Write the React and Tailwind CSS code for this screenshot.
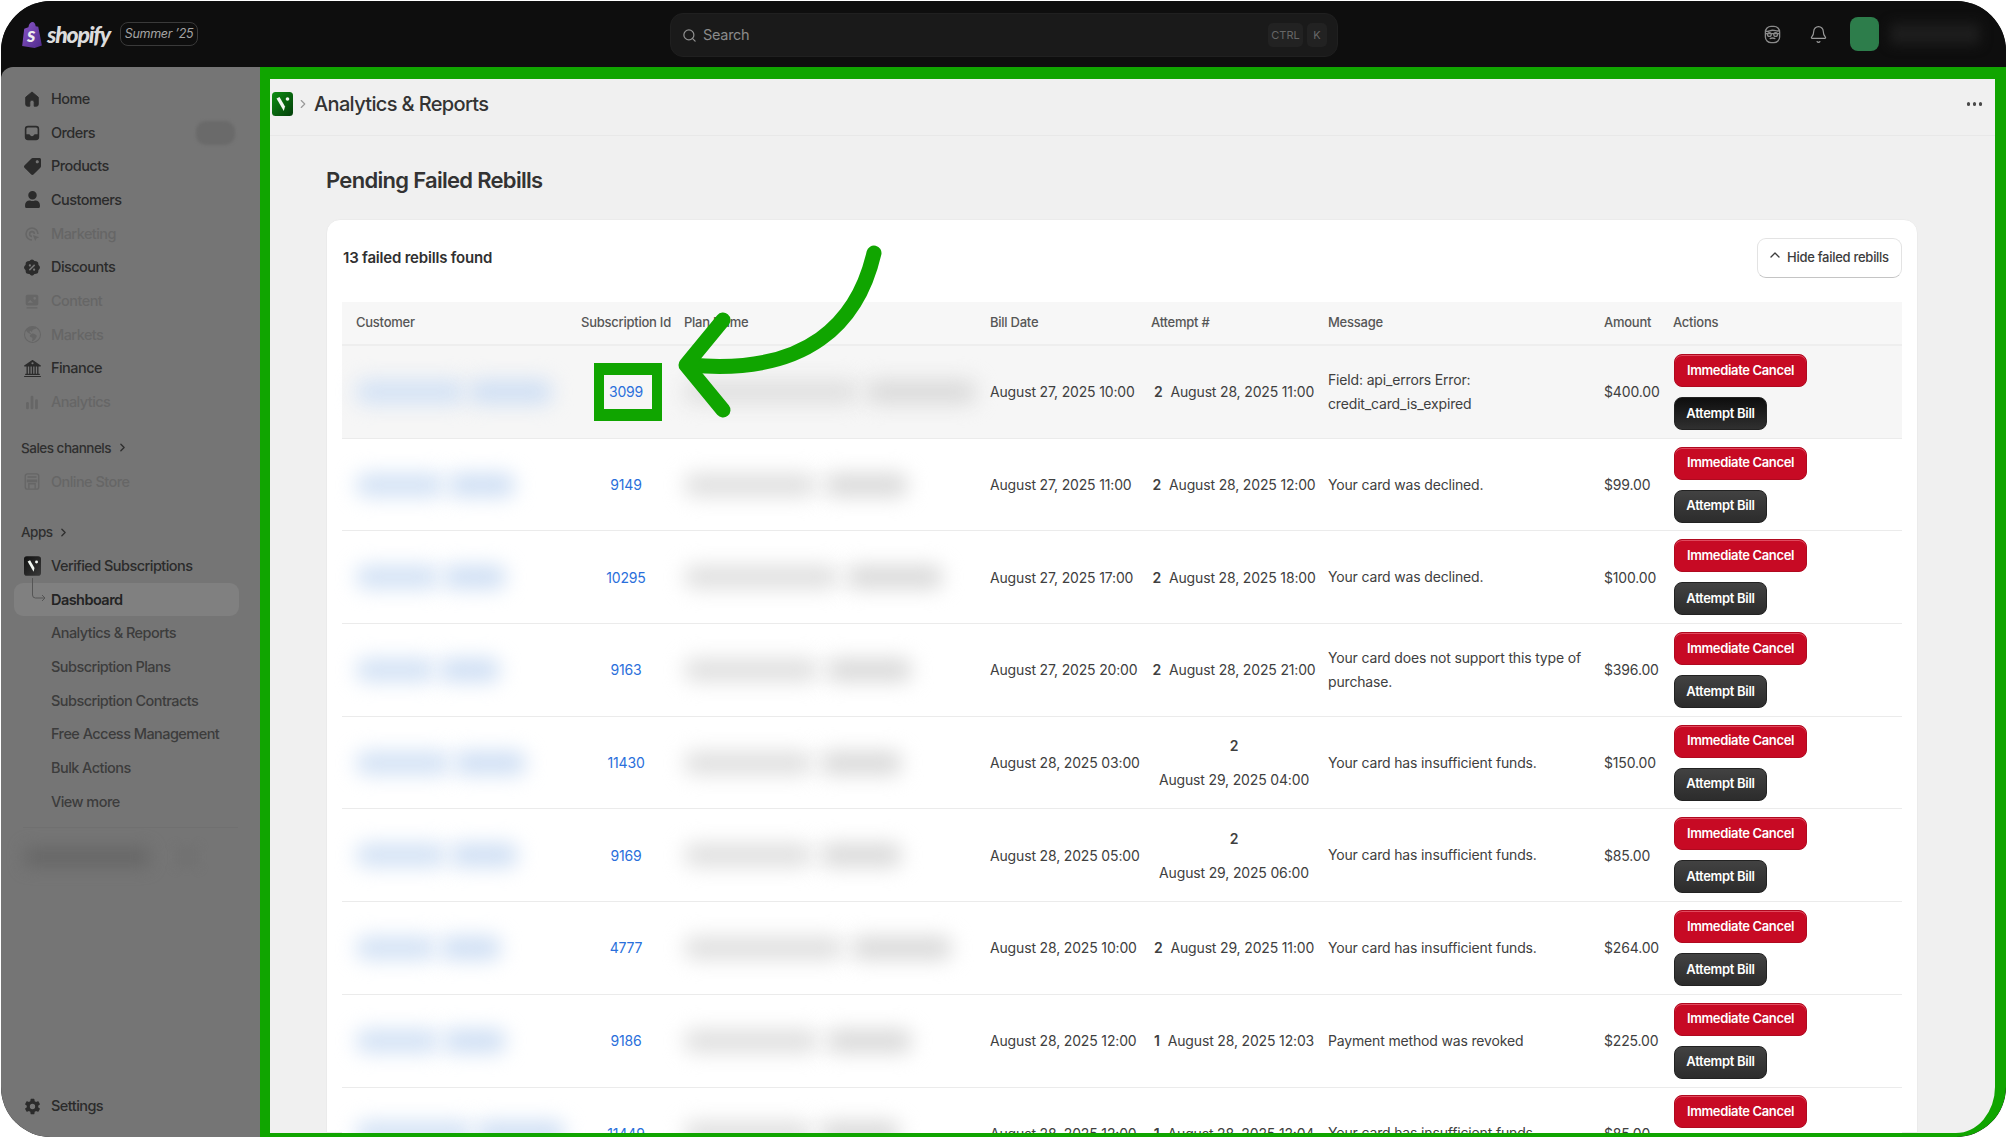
import React from "react";
import { Search, Bell, ChevronRight, ChevronUp } from "lucide-react";
import { FaTag, FaUser } from "react-icons/fa";
import { RiDiscountPercentFill } from "react-icons/ri";
import { BsBank2, BsGlobeAmericas } from "react-icons/bs";
import { IoSettingsSharp } from "react-icons/io5";

const I = ({ children }) => (
  <svg viewBox="0 0 20 20" className="w-[18px] h-[18px]" fill="currentColor">{children}</svg>
);
const HomeI = () => <I><path d="M10 2.2 3 8v8a2 2 0 0 0 2 2h2.6v-4.4a2.4 2.4 0 0 1 4.8 0V18H15a2 2 0 0 0 2-2V8z" strokeLinejoin="round" stroke="currentColor" /></I>;
const OrdersI = () => <I><path fillRule="evenodd" d="M5.5 2h9A3.5 3.5 0 0 1 18 5.500v9a3.500 3.500 0 0 1-3.500 3.500h-9A3.500 3.500 0 0 1 2 14.500v-9A3.500 3.500 0 0 1 5.500 2zm-1.700 9.500h3.400c.5 1.300 1.600 2 2.800 2s2.300-.7 2.800-2h3.400v-6a1.700 1.700 0 0 0-1.700-1.700h-9a1.700 1.700 0 0 0-1.700 1.700z" /></I>;
const MarketingI = () => <I><path d="M10 2.500a7.500 7.500 0 0 1 7.500 7.500h-1.800A5.700 5.700 0 1 0 10 15.700v1.800A7.500 7.500 0 0 1 10 2.500zm0 4a3.500 3.500 0 0 1 3.500 3.500h-1.700A1.800 1.800 0 1 0 10 11.800v1.700a3.500 3.500 0 0 1 0-7zM11 11l7 2.500-3 1.400-1.400 3z" /></I>;
const ContentI = () => <I><path fillRule="evenodd" d="M5 3h10a2 2 0 0 1 2 2v8a2 2 0 0 1-2 2H5a2 2 0 0 1-2-2V5a2 2 0 0 1 2-2zm8 2.500a1.500 1.500 0 1 0 0 3 1.500 1.500 0 0 0 0-3zM5 12l3-3 3 3zM4 17h12v1.400H4z" /></I>;
const AnalyticsI = () => <I><rect x="3.500" y="10" width="3" height="8" rx="1.400" /><rect x="8.500" y="3" width="3" height="15" rx="1.400" /><rect x="13.500" y="7" width="3" height="11" rx="1.400" /></I>;
const StoreI = () => <svg viewBox="0 0 20 20" className="w-[19px] h-[19px]" fill="none" stroke="currentColor" strokeWidth="1.500"><rect x="2.500" y="1.500" width="15" height="17" rx="2.500" /><path d="M5 5h10M5 8.500h10v1.500H5zM6.500 18v-5.500h7V18" /></svg>;
const VMark = ({ id, from, to, size }) => (
  <svg viewBox="0 0 21 24" className={size}>
    <defs><linearGradient id={id} x1="0" y1="0" x2="1" y2="1"><stop offset="0" stopColor={from} /><stop offset="1" stopColor={to} /></linearGradient></defs>
    <rect width="21" height="24" rx="3.500" fill={`url(#${id})`} />
    <path d="M4.500 6.500 7.500 5l5.500 9.500-1.200 4.500z" fill="#f2f7f2" />
    <circle cx="15.500" cy="7" r="1.800" fill="#f2f7f2" />
  </svg>
);

const S = (c) => <span className="flex w-[18px] justify-center text-[17px]">{c}</span>;
const primary = [
  ["Home", <HomeI />, 1],
  ["Orders", <OrdersI />, 1],
  ["Products", <FaTag className="rotate-90" />, 1],
  ["Customers", <FaUser />, 1],
  ["Marketing", <MarketingI />, 0],
  ["Discounts", <RiDiscountPercentFill className="text-[19px]" />, 1],
  ["Content", <ContentI />, 0],
  ["Markets", <BsGlobeAmericas />, 0],
  ["Finance", <BsBank2 />, 1],
  ["Analytics", <AnalyticsI />, 0],
];
const subs = ["Analytics & Reports", "Subscription Plans", "Subscription Contracts", "Free Access Management", "Bulk Actions", "View more"];

function NavRow({ label, icon, on = true, badge }) {
  return (
    <div className={`relative flex h-[33.7px] items-center pl-[22px] text-[14.5px] font-medium tracking-[-0.55px] ${on ? "text-[#2b2b2b]" : "text-[#666666]"}`}>
      <span className="flex w-[28px] items-center">{S(icon)}</span>
      {label}
      {badge && <span className="absolute left-[195px] top-[5px] h-[24px] w-[39px] rounded-[10px] bg-[#6a6a6a] blur-[1.5px]" />}
    </div>
  );
}

function Sidebar() {
  return (
    <aside className="flex w-[259px] shrink-0 flex-col rounded-tl-[12px] bg-[#757575] pt-[15px]">
      {primary.map(([l, ic, on]) => <NavRow key={l} label={l} icon={ic} on={!!on} badge={l === "Orders"} />)}
      <div className="mt-[12px] flex h-[33.7px] items-center gap-[5px] pl-[20px] text-[13.5px] font-medium tracking-[-0.5px] text-[#2f2f2f]">
        Sales channels <ChevronRight size={13} strokeWidth={2.5} />
      </div>
      <NavRow label="Online Store" icon={<StoreI />} on={false} />
      <div className="mt-[17px] flex h-[33.7px] items-center gap-[4px] pl-[20px] text-[13.5px] font-medium tracking-[-0.5px] text-[#2f2f2f]">
        Apps <ChevronRight size={13} strokeWidth={2.5} />
      </div>
      <NavRow label="Verified Subscriptions" icon={<VMark id="vs" from="#111111" to="#3a3a3a" size="w-[17px] h-[20px]" />} />
      <div className="relative mx-[13px] flex h-[33.7px] w-[225px] items-center rounded-[9px] bg-[#808080] pl-[37px] text-[14.5px] font-semibold tracking-[-0.55px] text-[#232323]">
        <svg viewBox="0 0 16 28" className="absolute left-[17px] top-[-5px] h-[28px] w-[16px]" fill="none" stroke="#555555" strokeWidth="1"><path d="M1.500 0v17a3 3 0 0 0 3 3H14M11 17l3 3-3 3" /></svg>
        Dashboard
      </div>
      {subs.map((s) => (
        <div key={s} className="flex h-[33.7px] items-center pl-[50px] text-[14.5px] font-medium tracking-[-0.55px] text-[#3c3c3c]">{s}</div>
      ))}
      <div className="mx-[22px] mt-[9px] h-px bg-[#707070]" />
      <div className="mt-[18px] flex items-center gap-[26px] pl-[24px]">
        <span className="h-[20px] w-[124px] rounded bg-[#686868] blur-[8px]" />
        <span className="h-[22px] w-[24px] rounded bg-[#727272] blur-[4px]" />
      </div>
      <div className="mt-auto mb-[14px]">
        <NavRow label="Settings" icon={<IoSettingsSharp />} />
      </div>
    </aside>
  );
}

function TopBar() {
  return (
    <header className="relative flex h-[66px] shrink-0 items-center bg-[#0e0e0e] pl-[20px] pr-[26px]">
      <svg viewBox="0 0 20 26" className="h-[27px] w-[21px] shrink-0">
        <defs><linearGradient id="bag" x1="0" y1="0" x2="1" y2="1"><stop offset="0" stopColor="#8a56c9" /><stop offset="1" stopColor="#4f2a8a" /></linearGradient></defs>
        <path d="M1 24 3 7.500 7 6C7.500 2.500 9.500 1 11 1s3 2 3 4l2.500.5L20 23.500 13 26z" fill="url(#bag)" />
        <text x="9.500" y="20" textAnchor="middle" fontSize="15" fontWeight="800" fontStyle="italic" fill="#eeeeee" fontFamily="Lato, sans-serif">S</text>
      </svg>
      <span className="ml-[5px] text-[23px] leading-none font-black italic tracking-[-1.2px] text-[#dcdcdc] [font-family:Lato,sans-serif]">shopify</span>
      <span className="ml-[10px] flex h-[24px] w-[78px] items-center justify-center rounded-[8px] border border-[#3a3a3a] text-[12.5px] italic tracking-[-0.3px] text-[#a3a3a3]">Summer ’25</span>
      <div className="absolute left-[669px] top-[12px] flex h-[44px] w-[668px] items-center rounded-[13px] border border-[#202020] bg-[#1a1a1a] pl-[11px] pr-[10px]">
        <Search size={15} className="text-[#8f8f8f]" />
        <span className="ml-[6px] text-[14.5px] tracking-[-0.3px] text-[#8a8a8a]">Search</span>
        <span className="ml-auto flex h-[24px] w-[35px] items-center justify-center rounded-[5px] bg-[#222222] text-[11px] text-[#666666]">CTRL</span>
        <span className="ml-[4px] flex h-[24px] w-[20px] items-center justify-center rounded-[5px] bg-[#222222] text-[11px] text-[#666666]">K</span>
      </div>
      <div className="ml-auto flex items-center">
        <svg viewBox="0 0 20 20" className="h-[19px] w-[19px]" fill="none" stroke="#8a8a8a" strokeWidth="1.400">
          <rect x="2.500" y="1.500" width="15" height="17" rx="6" />
          <path d="M3 6.500c3 1 4-1 7-1s5 1.500 7 .5M3 9h14" />
          <circle cx="6.700" cy="10" r="2" /><circle cx="13.300" cy="10" r="2" />
          <path d="M7 14.500c1.500-.8 4.500-.8 6 0" />
        </svg>
        <Bell size={19} strokeWidth={1.5} className="ml-[27px] text-[#9a9a9a]" />
        <span className="ml-[22px] h-[34px] w-[29px] rounded-[8px] bg-[#2d7d4b]" />
        <span className="ml-[11px] h-[22px] w-[90px] rounded bg-[#1d1d1d] blur-[6px]" />
      </div>
    </header>
  );
}

const rows = [
  { c: 198, id: "3099", p: 294, b: "August 27, 2025 10:00", n: "2", d: "August 28, 2025 11:00", m: ["Field: api_errors Error:", "credit_card_is_expired"], a: "$400.00", hi: true },
  { c: 160, id: "9149", p: 220, b: "August 27, 2025 11:00", n: "2", d: "August 28, 2025 12:00", m: ["Your card was declined."], a: "$99.00" },
  { c: 150, id: "10295", p: 256, b: "August 27, 2025 17:00", n: "2", d: "August 28, 2025 18:00", m: ["Your card was declined."], a: "$100.00" },
  { c: 144, id: "9163", p: 224, b: "August 27, 2025 20:00", n: "2", d: "August 28, 2025 21:00", m: ["Your card does not support this type of", "purchase."], a: "$396.00" },
  { c: 171, id: "11430", p: 214, b: "August 28, 2025 03:00", n: "2", d: "August 29, 2025 04:00", m: ["Your card has insufficient funds."], a: "$150.00", wrap: true },
  { c: 163, id: "9169", p: 214, b: "August 28, 2025 05:00", n: "2", d: "August 29, 2025 06:00", m: ["Your card has insufficient funds."], a: "$85.00", wrap: true },
  { c: 145, id: "4777", p: 265, b: "August 28, 2025 10:00", n: "2", d: "August 29, 2025 11:00", m: ["Your card has insufficient funds."], a: "$264.00" },
  { c: 151, id: "9186", p: 224, b: "August 28, 2025 12:00", n: "1", d: "August 28, 2025 12:03", m: ["Payment method was revoked"], a: "$225.00" },
  { c: 211, id: "11449", p: 212, b: "August 28, 2025 12:00", n: "1", d: "August 28, 2025 12:04", m: ["Your card has insufficient funds."], a: "$85.00" },
];
const grid = "grid grid-cols-[225px_103px_306px_161px_177px_276px_69px_242px]";
const cell = "pl-[14px] flex items-center";

function Row({ r }) {
  return (
    <div className={`${grid} h-[92.7px] shrink-0 border-b border-[#ebebeb] text-[14px] tracking-[-0.16px] text-[#404040] ${r.hi ? "bg-[#f6f6f6]" : "bg-white"}`}>
      <div className={`${cell} gap-[4px]`}>
        <span className="h-[24px] rounded-[10px] bg-[#d3e2f5] blur-[10px]" style={{ width: r.c * 0.55 }} />
        <span className="h-[24px] rounded-[10px] bg-[#cfdff4] blur-[10px]" style={{ width: r.c * 0.42 }} />
      </div>
      <div className="flex items-center justify-center pl-[15px]"><span className="text-[#2a6fdb]">{r.id}</span></div>
      <div className={`${cell} gap-[8px]`}>
        <span className="h-[24px] rounded-[10px] bg-[#e0e0e0] blur-[10px]" style={{ width: r.p * 0.6 }} />
        <span className="h-[24px] rounded-[10px] bg-[#dadada] blur-[10px]" style={{ width: r.p * 0.38 }} />
      </div>
      <div className={cell}><span className="whitespace-nowrap">{r.b}</span></div>
      {r.wrap ? (
        <div className="flex flex-col items-center justify-center gap-[15px] pl-[21px] pr-[4px] leading-[19px]">
          <span className="font-semibold">{r.n}</span>
          <span className="whitespace-nowrap">{r.d}</span>
        </div>
      ) : (
        <div className="flex items-center justify-center gap-[8px] pl-[21px] pr-[4px] whitespace-nowrap">
          <span className="font-semibold">{r.n}</span>
          <span>{r.d}</span>
        </div>
      )}
      <div className="flex flex-col justify-center pl-[14px] leading-[24px]">
        {r.m.map((t) => <span key={t} className="whitespace-nowrap">{t}</span>)}
      </div>
      <div className={cell}><span className="whitespace-nowrap">{r.a}</span></div>
      <div className="flex flex-col items-start justify-center gap-[10px] pl-[15px]">
        <button className="flex h-[33px] w-[133px] items-center justify-center rounded-[8px] border border-[#b0091f] bg-[#c70a24] text-[13px] font-semibold tracking-[-0.35px] text-white shadow-[inset_0_1px_0_#e04a5e]">Immediate Cancel</button>
        <button className={`flex h-[33px] w-[93px] items-center justify-center rounded-[8px] border border-[#222222] text-[13px] font-semibold tracking-[-0.3px] text-white ${r.hi ? "bg-gradient-to-b from-[#0e0e0e] to-[#303030]" : "bg-gradient-to-b from-[#424242] to-[#2c2c2c]"}`}>Attempt Bill</button>
      </div>
    </div>
  );
}

const heads = ["Customer", "Subscription Id", "Plan Name", "Bill Date", "Attempt #", "Message", "Amount", "Actions"];

function Main() {
  return (
    <main className="flex min-w-0 flex-1 flex-col overflow-hidden rounded-br-[50px] border-t-[12px] border-r-[11px] border-b-[4px] border-l-[10px] border-[#10a500] bg-[#f0f0f0]">
      <div className="flex h-[57px] shrink-0 items-center border-b border-[#e8e8e8] pb-[6px] pl-[2px] pr-[13px]">
        <VMark id="vm" from="#0d8f12" to="#033d0a" size="w-[21px] h-[24px]" />
        <ChevronRight size={14} className="ml-[3px] text-[#9a9a9a]" />
        <span className="ml-[4px] text-[20px] font-medium tracking-[-0.65px] text-[#333333]">Analytics &amp; Reports</span>
        <span className="ml-auto flex gap-[2.5px]">
          <i className="h-[3.5px] w-[3.5px] rounded-full bg-[#4a4a4a]" />
          <i className="h-[3.5px] w-[3.5px] rounded-full bg-[#4a4a4a]" />
          <i className="h-[3.5px] w-[3.5px] rounded-full bg-[#4a4a4a]" />
        </span>
      </div>
      <div className="flex min-h-0 flex-1 flex-col pl-[56px] pr-[77px]">
        <h1 className="mt-[29px] h-[30px] shrink-0 text-[22px] leading-[30px] font-semibold tracking-[-0.7px] text-[#333333]">Pending Failed Rebills</h1>
        <section className="mt-[24px] flex min-h-0 flex-1 flex-col rounded-t-[14px] border border-[#ebebeb] bg-white px-[15px] pt-[18px]">
          <div className="flex h-[40px] shrink-0 items-center justify-between">
            <span className="ml-px text-[15px] font-semibold tracking-[-0.2px] text-[#303030]">13 failed rebills found</span>
            <button className="flex h-[40px] w-[145px] items-center gap-[4px] rounded-[9px] border border-[#e3e3e3] border-b-[#c4c4c4] bg-white pl-[9px] text-[13px] font-medium tracking-[-0.28px] text-[#3c3c3c]">
              <ChevronUp size={16} className="mt-[-7px]" />
              Hide failed rebills
            </button>
          </div>
          <div className={`${grid} mt-[24px] h-[44px] shrink-0 items-center border-b-2 border-[#eeeeee] bg-[#f7f7f7] text-[13px] font-medium tracking-[-0.25px] text-[#565656]`}>
            {heads.map((h) => <span key={h} className="pl-[14px] whitespace-nowrap">{h}</span>)}
          </div>
          {rows.map((r) => <Row key={r.id} r={r} />)}
        </section>
      </div>
    </main>
  );
}

export default function App() {
  return (
    <div className="relative h-screen w-screen overflow-hidden bg-white [font-family:Inter,sans-serif]">
      <div className="mt-px ml-px flex h-[1136px] w-[2005px] flex-col overflow-hidden rounded-[50px] bg-[#0e0e0e]">
        <TopBar />
        <div className="flex min-h-0 flex-1">
          <Sidebar />
          <Main />
        </div>
      </div>
      <div className="pointer-events-none absolute left-[594px] top-[363px] h-[58px] w-[68px] border-x-[10px] border-y-[12px] border-[#10a500]" />
      <svg className="pointer-events-none absolute left-[660px] top-[240px] h-[200px] w-[240px]" viewBox="660 240 240 200" fill="none" stroke="#10a500" strokeWidth="15" strokeLinecap="round" strokeLinejoin="round">
        <path d="M874 253C858 322 808 376 690 365" />
        <path d="M723 320 686 365 723 410" />
      </svg>
    </div>
  );
}
